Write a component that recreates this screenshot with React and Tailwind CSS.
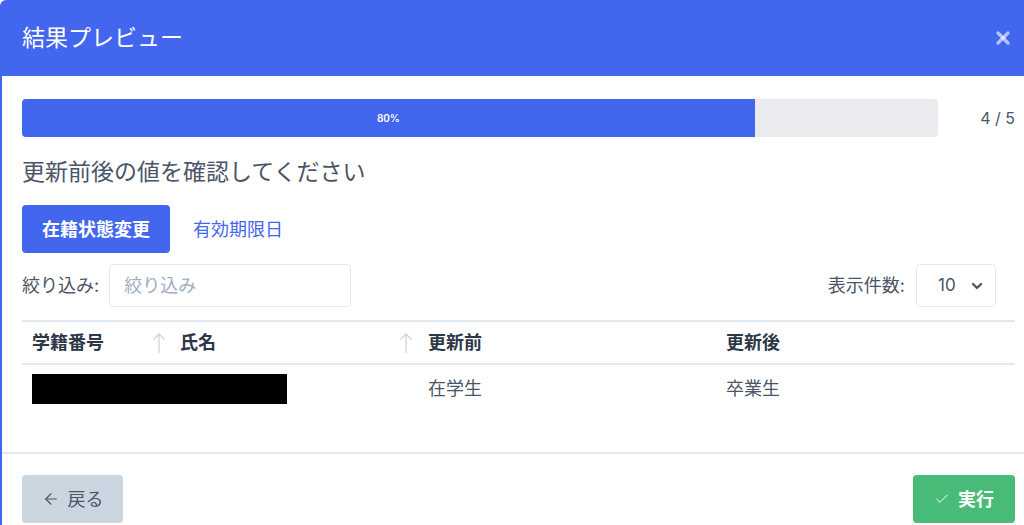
import { X, ChevronDown, ArrowLeft, Check } from 'lucide-react'

const font = { fontFamily: "Inter, 'Noto Sans CJK JP', sans-serif" }

function SortArrow() {
  return (
    <svg width="14" height="22" viewBox="0 0 14 22" className="text-[#cbd5e0]">
      <path d="M7 21V2M1.5 7.5L7 2l5.5 5.5" fill="none" stroke="currentColor" strokeWidth="1.3" />
    </svg>
  )
}

export default function App() {
  return (
    <div className="w-[1024px] h-[525px] overflow-hidden bg-white flex flex-col" style={font}>
      {/* Header */}
      <header className="h-[76px] shrink-0 bg-[#4366ee] rounded-tl-md flex items-center justify-between pl-[22px] pr-[11px]">
        <h1 className="text-[23px] text-white">結果プレビュー</h1>
        <X className="w-[20px] h-[20px] text-white/60" strokeWidth={4} />
      </header>

      <div className="flex-1 flex flex-col border-l-2 border-[#4366ee]">
        {/* Body */}
        <main className="pl-[20px] pr-[9px] pt-[23px]">
          <div className="flex items-center">
            <div className="flex-1 h-[38px] rounded bg-[#e9ebee] overflow-hidden">
              <div className="w-[80%] h-full bg-[#4366ee] flex items-center justify-center text-[10px] font-semibold text-white">
                80%
              </div>
            </div>
            <div className="w-[77px] text-right text-[16px] text-[#4a5568]">4 / 5</div>
          </div>

          <p className="mt-[19px] text-[23px] leading-[32px] text-[#4a5568]">更新前後の値を確認してください</p>

          <div className="mt-[17px] flex items-center gap-[23px]">
            <button className="h-[48px] px-[20px] rounded bg-[#4366ee] text-white text-[18px] font-semibold">在籍状態変更</button>
            <a className="text-[18px] text-[#4366ee]" href="#">有効期限日</a>
          </div>

          <div className="mt-[11px] flex items-center justify-between">
            <div className="flex items-center gap-[10px]">
              <label className="text-[18px] text-[#4a5568]">絞り込み:</label>
              <input
                className="w-[242px] h-[43px] rounded border border-[#e2e8f0] px-[14px] text-[18px] placeholder:text-[#a0aec0] outline-none"
                placeholder="絞り込み"
              />
            </div>
            <div className="flex items-center gap-[11px] mr-[19px]">
              <label className="text-[18px] text-[#4a5568]">表示件数:</label>
              <div className="w-[80px] h-[43px] rounded border border-[#e2e8f0] flex items-center justify-between pl-[21px] pr-[10px] text-[17px] text-[#4a5568]">
                10
                <ChevronDown className="w-[16px] h-[16px] text-[#4a5568]" strokeWidth={3.5} />
              </div>
            </div>
          </div>

          <table className="mt-[13px] w-full text-[18px] border-t-2 border-[#e2e8f0]">
            <thead>
              <tr className="h-[43px] border-b-2 border-[#e2e8f0] text-left text-[#2d3748]">
                <th className="pl-[10px] w-[130px] font-bold">学籍番号</th>
                <th className="w-[247px] font-bold">
                  <span className="flex items-center gap-[14px]"><SortArrow />氏名</span>
                </th>
                <th className="w-[327px] font-bold">
                  <span className="flex items-center gap-[15px]"><SortArrow />更新前</span>
                </th>
                <th className="font-bold">更新後</th>
              </tr>
            </thead>
            <tbody>
              <tr className="h-[48px] text-[#4a5568]">
                <td className="pl-[10px]" colSpan={2}>
                  <div className="w-[255px] h-[30px] bg-black" />
                </td>
                <td className="pl-[29px]">在学生</td>
                <td>卒業生</td>
              </tr>
            </tbody>
          </table>
        </main>

        {/* Footer */}
        <footer className="mt-auto border-t-2 border-[#e2e8f0] pl-[20px] pr-[9px] pt-[21px] pb-[2px] flex justify-between">
          <button className="h-[48px] w-[101px] rounded bg-[#cbd5e0] text-[#4a5568] text-[18px] flex items-center justify-center gap-[8px]">
            <ArrowLeft className="w-[18px] h-[18px]" strokeWidth={1.5} />
            戻る
          </button>
          <button className="h-[48px] w-[102px] rounded bg-[#48bb78] text-white text-[18px] font-semibold flex items-center justify-center gap-[8px]">
            <Check className="w-[16px] h-[16px]" strokeWidth={1.5} />
            実行
          </button>
        </footer>
      </div>
    </div>
  )
}
